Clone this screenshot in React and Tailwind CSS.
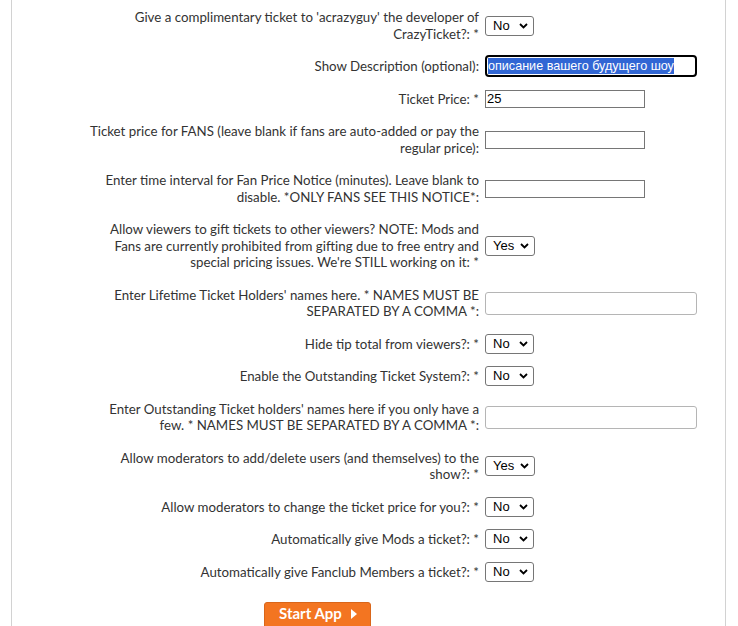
import { useState } from "react";

/* ---------------- FORM ROWS ---------------- */
const rows = [
  {
    lines: ["Give a complimentary ticket to 'acrazyguy' the developer of", "CrazyTicket?: *"],
    type: "select",
    value: "No",
  },
  { lines: ["Show Description (optional):"], type: "focused", value: "описание вашего будущего шоу" },
  { lines: ["Ticket Price: *"], type: "text", value: "25" },
  {
    lines: ["Ticket price for FANS (leave blank if fans are auto-added or pay the", "regular price):"],
    type: "text",
  },
  {
    lines: ["Enter time interval for Fan Price Notice (minutes). Leave blank to", "disable. *ONLY FANS SEE THIS NOTICE*:"],
    type: "text",
  },
  {
    lines: [
      "Allow viewers to gift tickets to other viewers? NOTE: Mods and",
      "Fans are currently prohibited from gifting due to free entry and",
      "special pricing issues. We're STILL working on it: *",
    ],
    type: "select",
    value: "Yes",
  },
  {
    lines: ["Enter Lifetime Ticket Holders' names here. * NAMES MUST BE", "SEPARATED BY A COMMA *:"],
    type: "wide",
  },
  { lines: ["Hide tip total from viewers?: *"], type: "select", value: "No" },
  { lines: ["Enable the Outstanding Ticket System?: *"], type: "select", value: "No" },
  {
    lines: ["Enter Outstanding Ticket holders' names here if you only have a", "few. * NAMES MUST BE SEPARATED BY A COMMA *:"],
    type: "wide",
  },
  {
    lines: ["Allow moderators to add/delete users (and themselves) to the", "show?: *"],
    type: "select",
    value: "Yes",
  },
  { lines: ["Allow moderators to change the ticket price for you?: *"], type: "select", value: "No" },
  { lines: ["Automatically give Mods a ticket?: *"], type: "select", value: "No" },
  { lines: ["Automatically give Fanclub Members a ticket?: *"], type: "select", value: "No" },
];

const Chevron = () => (
  <svg width="9" height="6" viewBox="0 0 9 6" className="absolute right-[6px] top-1/2 -translate-y-1/2 pointer-events-none">
    <path d="M1 1 L4.5 4.5 L8 1" fill="none" stroke="#000" strokeWidth="1.8" />
  </svg>
);

function Control({ row }) {
  const [val, setVal] = useState(row.value || "");

  if (row.type === "select") {
    return (
      <div className="relative flex">
        <select
          value={val}
          onChange={(e) => setVal(e.target.value)}
          className={`appearance-none h-[20px] ${
            val === "Yes" ? "w-[50px]" : "w-[49px]"
          } border border-[#767676] rounded-[3px] bg-white pl-[7px] text-[13px] leading-[18px] text-black font-['Liberation_Sans',Arial,sans-serif]`}
        >
          <option>No</option>
          <option>Yes</option>
        </select>
        <Chevron />
      </div>
    );
  }

  if (row.type === "focused") {
    return (
      <div className="w-[212px] h-[22px] border-2 border-black rounded-[4px] bg-white flex items-center pl-[1px]">
        <span className="bg-[#3166d4] text-white text-[12.6px] leading-[16px] font-['Liberation_Sans',Arial,sans-serif] whitespace-nowrap">
          {row.value}
        </span>
      </div>
    );
  }

  if (row.type === "wide") {
    return (
      <input
        type="text"
        className="block w-[212px] h-[23px] border border-[#b5b5b5] rounded-[3px] bg-white px-1 text-[13px] font-['Liberation_Sans',Arial,sans-serif]"
      />
    );
  }

  return (
    <input
      type="text"
      value={val}
      onChange={(e) => setVal(e.target.value)}
      className="block w-[160px] h-[18px] border border-[#767676] bg-white pl-[1px] text-[13px] leading-[16px] text-black font-['Liberation_Sans',Arial,sans-serif]"
    />
  );
}

export default function App() {
  return (
    <div className="w-[738px] h-[626px] overflow-hidden bg-white font-['Lato','Noto_Sans',sans-serif]">
      <div className="ml-[11px] w-[715px] min-h-[700px] border-x border-[#d2d2d2] pt-px">
        {/* ROWS */}
        {rows.map((row, i) => (
          <div key={i} className="flex items-center">
            <div className="w-[467px] py-2 text-right text-[13.3px] leading-[16.5px] text-[#333]">
              {row.lines.map((line, j) => (
                <div key={j} className="whitespace-nowrap">
                  {line}
                </div>
              ))}
            </div>
            <div className="ml-[6px] flex">
              <Control row={row} />
            </div>
          </div>
        ))}

        {/* SUBMIT */}
        <div className="mt-[14px] pl-[252px] flex">
          <button className="h-[27px] w-[107px] rounded-[3px] border border-[#d9661a] bg-[#f37521] text-white font-bold text-[15px] leading-none flex items-center pl-[14px] pb-[4px] gap-[9px]">
            Start App
            <svg width="6" height="10" viewBox="0 0 6 10">
              <path d="M0 0 L6 5 L0 10 Z" fill="#fff" />
            </svg>
          </button>
        </div>
      </div>
    </div>
  );
}
